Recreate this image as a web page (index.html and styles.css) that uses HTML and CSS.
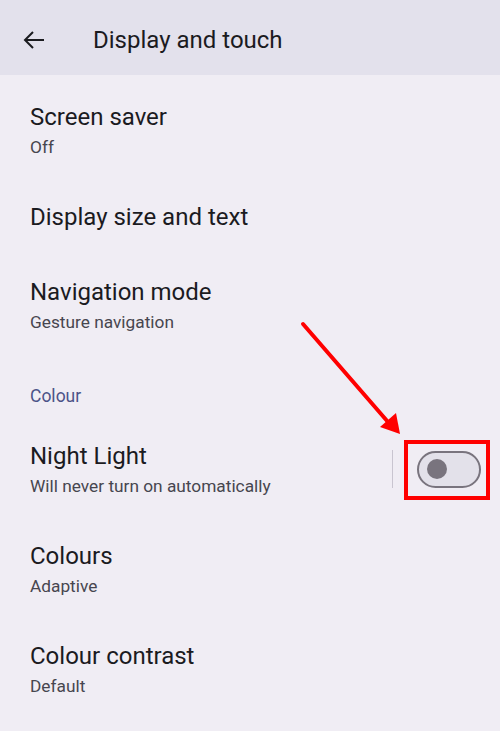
FILE: index.html
```html
<!DOCTYPE html>
<html lang="en">

<head>
    <meta charset="UTF-8">
    <meta name="viewport" content="width=device-width, initial-scale=1.0">
    <title>Display and touch</title>
    <link rel="stylesheet" href="styles.css">
</head>

<body>
    <header class="top-bar">
        <svg class="back-icon" width="24" height="24" viewBox="0 0 24 24">
            <path d="M3 11h19M11 3l-8 8 8 8" fill="none" stroke="#1b1b1f" stroke-width="2" />
        </svg>
        <h1>Display and touch</h1>
    </header>

    <main class="settings">
        <div class="item">
            <div class="item-title">Screen saver</div>
            <div class="item-summary">Off</div>
        </div>
        <div class="item single">
            <div class="item-title">Display size and text</div>
        </div>
        <div class="item">
            <div class="item-title">Navigation mode</div>
            <div class="item-summary">Gesture navigation</div>
        </div>

        <div class="category">Colour</div>

        <div class="item with-switch">
            <div class="item-text">
                <div class="item-title">Night Light</div>
                <div class="item-summary">Will never turn on automatically</div>
            </div>
            <div class="divider"></div>
            <div class="switch">
                <div class="thumb"></div>
            </div>
            <!-- highlight box round the switch -->
            <div class="highlight"></div>
        </div>
        <div class="item">
            <div class="item-title">Colours</div>
            <div class="item-summary">Adaptive</div>
        </div>
        <div class="item">
            <div class="item-title">Colour contrast</div>
            <div class="item-summary">Default</div>
        </div>
    </main>

    <!-- pointer arrow -->
    <svg class="pointer" width="500" height="731" viewBox="0 0 500 731">
        <line x1="303" y1="324" x2="388" y2="422" stroke="#ff0000" stroke-width="4" stroke-linecap="round" />
        <polygon points="400,434 380,427 396,413" fill="#ff0000" />
    </svg>
</body>

</html>
```

FILE: styles.css
```css
body {
    margin: 0;
    background: #f0edf4;
    font-family: Roboto, "Liberation Sans", sans-serif;
    color: #1b1b1f;
}

.top-bar {
    height: 75px;
    box-sizing: border-box;
    padding: 5px 0 0 22px;
    background-color: #e3e1ec;
    display: flex;
    align-items: center;
}

.back-icon {
    flex: none;
    margin-top: 2px;
}

.top-bar h1 {
    margin: 0 0 0 47px;
    font-size: 24px;
    font-weight: 400;
}

.settings {
    padding-top: 3px;
}

.item {
    padding: 22px 19px 18px 30px;
    position: relative;
}

.item.single {
    padding-bottom: 19px;
}

.item-title {
    font-size: 24px;
    line-height: 34px;
}

.item-summary {
    font-size: 17.3px;
    line-height: 26px;
    color: #47464f;
}

.category {
    padding: 32px 30px 10px;
    font-size: 17.5px;
    line-height: 22px;
    color: #4c5388;
}

.with-switch {
    display: flex;
    align-items: center;
}

.item-text {
    flex: 1;
}

.divider {
    width: 1px;
    height: 38px;
    background: #c9c5d0;
    margin-right: 24px;
}

.switch {
    width: 52px;
    height: 33px;
    border: 2px solid #79747e;
    border-radius: 20px;
    background: #e3e1ea;
    display: flex;
    align-items: center;
    padding-left: 8px;
}

.thumb {
    width: 20px;
    height: 20px;
    border-radius: 50%;
    background: #79747e;
}

.highlight {
    position: absolute;
    left: 404px;
    top: 23px;
    width: 78px;
    height: 52px;
    border: 4px solid #ff0000;
}

.pointer {
    position: absolute;
    left: 0;
    top: 0;
    pointer-events: none;
}
```
